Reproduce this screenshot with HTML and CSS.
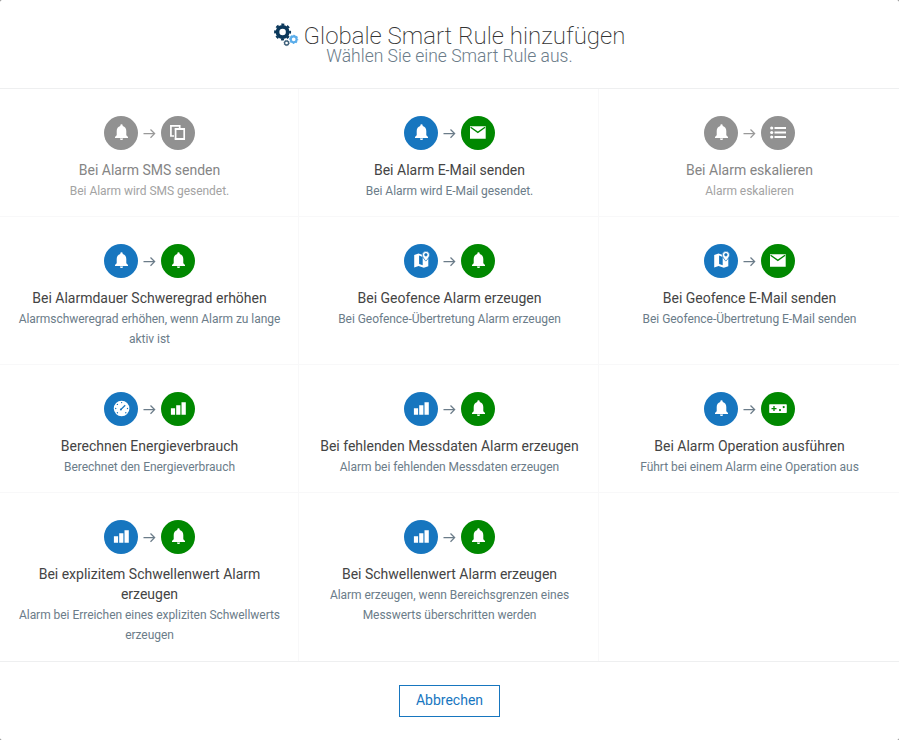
FILE: index.html
```html
<!DOCTYPE html>
<html lang="de">
<head>
<meta charset="utf-8">
<title>Globale Smart Rule hinzufügen</title>
<link rel="stylesheet" href="styles.css">
</head>
<body>
<svg class="sprite" aria-hidden="true">
  <symbol id="bell" viewBox="0 0 34 34"><path d="M16.300 10V9.500a1.200 1.200 0 0 1 2.400 0v.5c2.300.6 3.600 2.500 3.600 5v4.200l1.700 1.800v1H11v-1l1.700-1.800V15c0-2.500 1.300-4.400 3.600-5zM15.900 22.500h3.200a1.600 1.600 0 0 1-3.200 0z"/></symbol>
  <symbol id="sms" viewBox="0 0 34 34"><path fill="none" stroke="currentColor" stroke-width="1.700" d="M13 20H9.900V9.900h8.800v2.400M14.600 13h8.600v10h-8.600z"/><path d="M13.800 12.100h10.200v1.900H13.800zM13.800 22h10.200v2H13.800z"/></symbol>
  <symbol id="mail" viewBox="0 0 34 34"><path d="M9 10.200h15.700v12.500H9z"/><path class="cut" d="M9.600 11.300l7.250 5.100 7.250-5.100"/></symbol>
  <symbol id="list" viewBox="0 0 34 34"><circle cx="10.700" cy="12" r="1.600"/><circle cx="10.700" cy="16.500" r="1.600"/><circle cx="10.700" cy="21" r="1.600"/><path d="M13.500 11H25v1.900H13.500zM13.500 15.600H25v1.900H13.500zM13.500 20.100H25V22H13.500z"/></symbol>
  <symbol id="map" viewBox="0 0 34 34"><path fill-rule="evenodd" d="M10.200 11l4.300-1.500 3.700 1.200c0 2.200 1.700 4.600 3.700 6.600.9-.9 1.700-1.900 2.400-3v7.900l-4.500 1.600-5.200-1.800-4.400 1.600zM15.100 11.600v8.500l3.600 1.200v-8.300z"/><path fill-rule="evenodd" class="pin" d="M21.900 7.300a3.600 3.600 0 0 1 3.600 3.600c0 2.300-3.600 6.200-3.600 6.200s-3.600-3.900-3.600-6.200a3.600 3.600 0 0 1 3.600-3.600zm0 2.200a1.300 1.300 0 1 0 0 2.600 1.300 1.300 0 0 0 0-2.600z"/></symbol>
  <symbol id="gauge" viewBox="0 0 34 34"><circle cx="17.600" cy="16.500" r="7.800"/><path class="tick" d="M17 17.400l4.200-4.200"/><g class="dot"><circle cx="17.600" cy="10.600" r=".7"/><circle cx="13.400" cy="12.400" r=".7"/><circle cx="11.700" cy="16.500" r=".7"/><circle cx="13.400" cy="20.700" r=".7"/><circle cx="23.500" cy="16.500" r=".7"/><circle cx="21.800" cy="20.700" r=".7"/><circle cx="16.900" cy="17.500" r="1"/></g></symbol>
  <symbol id="bars" viewBox="0 0 34 34"><path d="M9.900 16.200h4.200v6.500H9.900zM15.200 13.200h4.200v9.500h-4.200zM20.500 10.200h4.300v12.500h-4.300z"/></symbol>
  <symbol id="pad" viewBox="0 0 34 34"><rect x="8.200" y="12.200" width="17.600" height="8.800" rx=".7"/><path class="tick" d="M10.500 16.600h5M13 14.100v5"/><g class="dot"><circle cx="19" cy="18.100" r="1.100"/><circle cx="22.700" cy="15.100" r="1.100"/></g></symbol>
  <symbol id="arrow" viewBox="0 0 13 12"><path fill="none" stroke="currentColor" stroke-width="1.300" d="M.5 5.600h11M7.500 1.500l4.100 4.100-4.100 4.100"/></symbol>
</svg>

<main class="modal">
  <header class="head">
    <h1><svg class="gears" viewBox="0 0 26 24" aria-hidden="true">
      <g fill="none"><circle cx="8.600" cy="9" r="5.100" stroke="#0b385b" stroke-width="3.700"/><circle cx="8.600" cy="9" r="7.500" stroke="#0b385b" stroke-width="2" stroke-dasharray="3 2.890" stroke-dashoffset="1.500"/>
      <circle cx="19.700" cy="16.300" r="2.900" stroke="#5badea" stroke-width="2.100"/><circle cx="19.700" cy="16.300" r="4" stroke="#5badea" stroke-width="1.200" stroke-dasharray="1.600 1.542" stroke-dashoffset=".8"/>
      <circle cx="12.600" cy="20" r="2" stroke="#3f617b" stroke-width="1.300"/><circle cx="12.600" cy="20" r="2.700" stroke="#3f617b" stroke-width=".7" stroke-dasharray="1 1.120"/></g>
    </svg>Globale Smart Rule hinzufügen</h1>
    <p>Wählen Sie eine Smart Rule aus.</p>
  </header>

  <section class="rules">
    <article class="rule off"><div class="flow"><svg class="badge in"><use href="#bell"/></svg><svg class="arrow"><use href="#arrow"/></svg><svg class="badge out"><use href="#sms"/></svg></div><h2>Bei Alarm SMS senden</h2><p>Bei Alarm wird SMS gesendet.</p></article>
    <article class="rule"><div class="flow"><svg class="badge in"><use href="#bell"/></svg><svg class="arrow"><use href="#arrow"/></svg><svg class="badge out"><use href="#mail"/></svg></div><h2>Bei Alarm E-Mail senden</h2><p>Bei Alarm wird E-Mail gesendet.</p></article>
    <article class="rule off"><div class="flow"><svg class="badge in"><use href="#bell"/></svg><svg class="arrow"><use href="#arrow"/></svg><svg class="badge out"><use href="#list"/></svg></div><h2>Bei Alarm eskalieren</h2><p>Alarm eskalieren</p></article>

    <article class="rule"><div class="flow"><svg class="badge in"><use href="#bell"/></svg><svg class="arrow"><use href="#arrow"/></svg><svg class="badge out"><use href="#bell"/></svg></div><h2>Bei Alarmdauer Schweregrad erhöhen</h2><p>Alarmschweregrad erhöhen, wenn Alarm zu lange aktiv ist</p></article>
    <article class="rule"><div class="flow"><svg class="badge in"><use href="#map"/></svg><svg class="arrow"><use href="#arrow"/></svg><svg class="badge out"><use href="#bell"/></svg></div><h2>Bei Geofence Alarm erzeugen</h2><p>Bei Geofence-Übertretung Alarm erzeugen</p></article>
    <article class="rule"><div class="flow"><svg class="badge in"><use href="#map"/></svg><svg class="arrow"><use href="#arrow"/></svg><svg class="badge out"><use href="#mail"/></svg></div><h2>Bei Geofence E-Mail senden</h2><p>Bei Geofence-Übertretung E-Mail senden</p></article>

    <article class="rule"><div class="flow"><svg class="badge in"><use href="#gauge"/></svg><svg class="arrow"><use href="#arrow"/></svg><svg class="badge out"><use href="#bars"/></svg></div><h2>Berechnen Energieverbrauch</h2><p>Berechnet den Energieverbrauch</p></article>
    <article class="rule"><div class="flow"><svg class="badge in"><use href="#bars"/></svg><svg class="arrow"><use href="#arrow"/></svg><svg class="badge out"><use href="#bell"/></svg></div><h2>Bei fehlenden Messdaten Alarm erzeugen</h2><p>Alarm bei fehlenden Messdaten erzeugen</p></article>
    <article class="rule"><div class="flow"><svg class="badge in"><use href="#bell"/></svg><svg class="arrow"><use href="#arrow"/></svg><svg class="badge out"><use href="#pad"/></svg></div><h2>Bei Alarm Operation ausführen</h2><p>Führt bei einem Alarm eine Operation aus</p></article>

    <article class="rule last"><div class="flow"><svg class="badge in"><use href="#bars"/></svg><svg class="arrow"><use href="#arrow"/></svg><svg class="badge out"><use href="#bell"/></svg></div><h2>Bei explizitem Schwellenwert Alarm erzeugen</h2><p>Alarm bei Erreichen eines expliziten Schwellwerts erzeugen</p></article>
    <article class="rule last"><div class="flow"><svg class="badge in"><use href="#bars"/></svg><svg class="arrow"><use href="#arrow"/></svg><svg class="badge out"><use href="#bell"/></svg></div><h2>Bei Schwellenwert Alarm erzeugen</h2><p>Alarm erzeugen, wenn Bereichsgrenzen eines Messwerts überschritten werden</p></article>
  </section>

  <footer class="foot"><button type="button">Abbrechen</button></footer>
</main>
</body>
</html>
```
FILE: styles.css
```css
* { box-sizing: border-box; }
body { margin: 0; background: #777; font-family: Roboto, sans-serif; overflow: hidden; }
h1, h2, p { margin: 0; }
.sprite { display: none; }
.modal { height: 740px; background: #fff; border-radius: 2px; overflow: hidden; text-align: center; }

.head { height: 89px; padding-top: 23px; border-bottom: 1px solid #eeeff0; }
.head h1 { display: flex; justify-content: center; gap: 4px; font-size: 24px; line-height: 26px; height: 24px; font-weight: 200; color: #333; white-space: nowrap; }
.gears { width: 26px; height: 24px; }
.head p { font-size: 17.5px; line-height: 18px; font-weight: 300; color: #6b7c89; }

.rules { display: grid; grid-template-columns: repeat(3, 300px); width: 900px; margin-left: -1px; height: 572px; grid-template-rows: 128px 148px 128px 168px; }
.rule { padding: 27px 15px 0 16px; box-shadow: inset -1px -1px #f8f8f9; }
.rule:nth-child(3n) { box-shadow: inset 0 -1px #f8f8f9; }
.rule.last { box-shadow: inset -1px 0 #f8f8f9; }
.flow { display: flex; align-items: center; justify-content: center; height: 34px; margin-bottom: 10px; }
.badge { width: 34px; height: 34px; border-radius: 50%; color: #fff; fill: currentColor; }
.in { background: #1776bf; --badge: #1776bf; }
.out { background: #080; --badge: #080; }
.cut, .tick { fill: none; stroke: var(--badge); stroke-width: 1.3; }
.dot { fill: var(--badge); }
.pin { stroke: var(--badge); stroke-width: .6; }
.arrow { width: 13px; height: 12px; margin: 1px 5px 0; color: #6b7c89; }
.rule h2 { font-size: 14px; line-height: 20px; font-weight: 400; color: #444; }
.rule p { font-size: 12px; line-height: 20px; padding-top: 1px; color: #6b7c89; letter-spacing: -.04px; }
.rule.off .badge { background: #919191; --badge: #919191; }
.rule.off .arrow { color: #999; }
.rule.off h2 { color: #858585; }
.rule.off p { color: #a3a3a3; }

.foot { height: 79px; padding-top: 23px; border-top: 1px solid #eeeff0; }
.foot button { display: block; width: 101px; height: 32px; margin: 0 auto; padding: 0 0 2px; border: 1px solid #1776bf; background: #fff; color: #1776bf; font: 400 14px/28px Roboto, sans-serif; }
```
